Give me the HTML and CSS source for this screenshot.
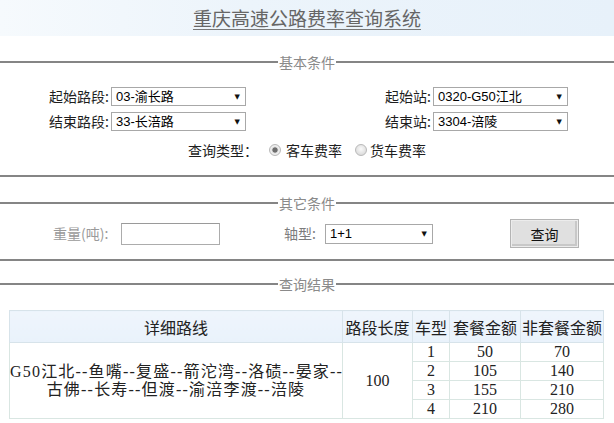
FILE: index.html
```html
<!DOCTYPE html>
<html lang="zh-CN">
<head>
<meta charset="utf-8">
<title>重庆高速公路费率查询系统</title>
<link rel="stylesheet" href="styles.css">
</head>
<body>
<header class="top">
  <h1 class="title">重庆高速公路费率查询系统</h1>
</header>

<section class="group g1">
  <div class="legend"><span>基本条件</span></div>
  <div class="gbody">
    <div class="pair-row">
      <div class="cell left">
        <label class="lbl">起始路段:</label>
        <span class="sel w135"><select><option>03-渝长路</option></select></span>
      </div>
      <div class="cell right">
        <label class="lbl">起始站:</label>
        <span class="sel w135"><select><option>0320-G50江北</option></select></span>
      </div>
    </div>
    <div class="pair-row">
      <div class="cell left">
        <label class="lbl">结束路段:</label>
        <span class="sel w135"><select><option>33-长涪路</option></select></span>
      </div>
      <div class="cell right">
        <label class="lbl">结束站:</label>
        <span class="sel w135"><select><option>3304-涪陵</option></select></span>
      </div>
    </div>
    <div class="type-row">
      <span class="type-lbl">查询类型：</span>
      <input type="radio" class="radio r1" name="t" checked>
      <span class="rtext t1">客车费率</span>
      <input type="radio" class="radio r2" name="t">
      <span class="rtext t2">货车费率</span>
    </div>
  </div>
</section>

<section class="group g2">
  <div class="legend"><span>其它条件</span></div>
  <div class="gbody">
    <div class="other-row">
      <label class="lbl weight">重量(吨):</label>
      <input type="text" class="txt">
      <label class="lbl axle">轴型:</label>
      <span class="sel w108"><select><option>1+1</option></select></span>
      <button class="btn" type="button">查询</button>
    </div>
  </div>
</section>

<section class="group g3">
  <div class="legend"><span>查询结果</span></div>
  <table class="result">
    <colgroup>
      <col class="c1"><col class="c2"><col class="c3"><col class="c4"><col class="c5">
    </colgroup>
    <thead>
      <tr><th>详细路线</th><th>路段长度</th><th>车型</th><th>套餐金额</th><th>非套餐金额</th></tr>
    </thead>
    <tbody>
      <tr>
        <td rowspan="4" class="route">G50江北--鱼嘴--复盛--箭沱湾--洛碛--晏家--<br>古佛--长寿--但渡--渝涪李渡--涪陵</td>
        <td rowspan="4">100</td>
        <td>1</td><td>50</td><td>70</td>
      </tr>
      <tr><td>2</td><td>105</td><td>140</td></tr>
      <tr><td>3</td><td>155</td><td>210</td></tr>
      <tr><td>4</td><td>210</td><td>280</td></tr>
    </tbody>
  </table>
</section>
</body>
</html>
```

FILE: styles.css
```css
* { box-sizing: border-box; }
html, body { margin: 0; padding: 0; background: #fff; }
body {
  width: 614px;
  height: 423px;
  overflow: hidden;
  font-family: "Liberation Sans", "Noto Sans CJK SC", sans-serif;
  font-size: 14px;
  color: #1e1e1e;
}

/* header band */
.top {
  height: 36px;
  background: linear-gradient(to right, #f6fafd, #ecf4fb 40%, #e7f1fa);
  display: flex;
  justify-content: center;
  align-items: center;
}
.title {
  margin: 0;
  font-family: "Noto Sans CJK SC", sans-serif;
  font-size: 19px;
  font-weight: normal;
  line-height: 22px;
  color: #666;
  text-decoration: underline;
  text-decoration-color: #777;
  text-underline-offset: 3px;
}

/* fieldset-like groups */
.legend {
  display: flex;
  align-items: center;
  height: 16px;
  line-height: 16px;
  font-family: "Noto Sans CJK SC", sans-serif;
  font-size: 14px;
  color: #8a8a8a;
}
.legend::before,
.legend::after {
  content: "";
  flex: 1;
  height: 2px;
  background: #858585;
}
.legend span { padding: 0 1px; }

.gbody {
  border-bottom: 2px solid #858585;
}

.g1 { margin-top: 18px; }
.g1 .gbody { padding: 17px 0 16px; }

.pair-row {
  display: flex;
  height: 19px;
  margin-bottom: 6px;
}
.cell {
  display: flex;
  justify-content: flex-end;
  align-items: center;
}
.cell.left { width: 246px; }
.cell.right { width: 322px; }

.lbl {
  font-family: "Noto Sans CJK SC", sans-serif;
  font-size: 14px;
  line-height: 19px;
  padding-right: 2px;
  color: #1e1e1e;
}

.sel {
  position: relative;
  display: inline-block;
}
.sel select {
  appearance: none;
  -webkit-appearance: none;
  display: block;
  height: 19px;
  margin: 0;
  padding: 0 14px 0 4px;
  border: 1px solid #a8a8a8;
  border-radius: 0;
  background: #fff;
  color: #000;
  font-family: "Liberation Sans", "Noto Sans CJK SC", sans-serif;
  font-size: 13px;
  line-height: 17px;
}
.sel::after {
  content: "▼";
  position: absolute;
  right: 6px;
  top: 50%;
  transform: translateY(-50%);
  font-family: "DejaVu Sans", sans-serif;
  font-size: 7px;
  line-height: 7px;
  color: #111;
  pointer-events: none;
}
.w135 select { width: 135px; }
.w108 select { width: 108px; height: 20px; }

.type-row {
  display: flex;
  align-items: center;
  height: 18px;
  margin-top: 10px;
  padding-left: 188px;
  font-family: "Noto Sans CJK SC", sans-serif;
  font-size: 14px;
}
.type-lbl { width: 70px; }
.radio {
  appearance: none;
  -webkit-appearance: none;
  width: 12px;
  height: 12px;
  margin: 0;
  border-radius: 50%;
  border: 1px solid #b9b9b9;
  background: radial-gradient(circle at 50% 40%, #fafafa, #dcdcdc 75%);
}
.radio:checked {
  background: radial-gradient(circle at 50% 50%, #6d6d6d 0 2.2px, #d9d9d9 3px, #f2f2f2 4px, #d6d6d6 100%);
}
.r1 { margin-left: 11px; }
.t1 { margin-left: 5px; }
.r2 { margin-left: 13px; }
.t2 { margin-left: 3px; }

/* other conditions */
.g2 { margin-top: 18px; }
.g2 .gbody { padding: 8px 0 11px; }
.other-row {
  display: flex;
  align-items: center;
  height: 29px;
  padding-left: 53px;
}
.lbl.weight { width: 68px; color: #9a9a9a; padding: 0; }
.txt {
  width: 99px;
  height: 22px;
  margin: 0;
  border: 1px solid #acacac;
  border-top-color: #9a9a9a;
  background: #fff;
}
.lbl.axle { width: 41px; margin-left: 64px; color: #7c7c7c; padding: 0; }
.btn {
  width: 69px;
  height: 29px;
  margin: 0 0 0 77px;
  padding: 0;
  border: 1px solid #b4b4b4;
  box-shadow: inset 0 0 0 1px #ececec, inset -1px -1px 0 2px #c8c8c8;
  background: #e0e0e0;
  font-family: "Noto Sans CJK SC", sans-serif;
  font-size: 14px;
  color: #111;
}

/* results */
.g3 { margin-top: 15px; }
.result {
  margin: 18px 0 0 9px;
  width: 594px;
  table-layout: fixed;
  border-collapse: collapse;
  border: 1px solid #d7e3ea;
}
.c1 { width: 333px; }
.c2 { width: 70px; }
.c3 { width: 37px; }
.c4 { width: 71px; }
.c5 { width: 83px; }
.result th {
  height: 32px;
  padding: 0;
  border: 1px solid #d7e3ea;
  background: linear-gradient(to bottom, #eff5fc, #e9f2fb);
  font-family: "Noto Sans CJK SC", sans-serif;
  font-size: 16px;
  font-weight: normal;
  color: #222;
  white-space: nowrap;
  text-align: center;
}
.result td {
  height: 19px;
  padding: 0;
  border: 1px solid #d9e6e2;
  font-family: "Liberation Serif", "Noto Sans CJK SC", serif;
  font-size: 16px;
  line-height: 18px;
  color: #222;
  text-align: center;
  vertical-align: middle;
  white-space: nowrap;
}
.result td.route { line-height: 18px; letter-spacing: 1.2px; }
```
